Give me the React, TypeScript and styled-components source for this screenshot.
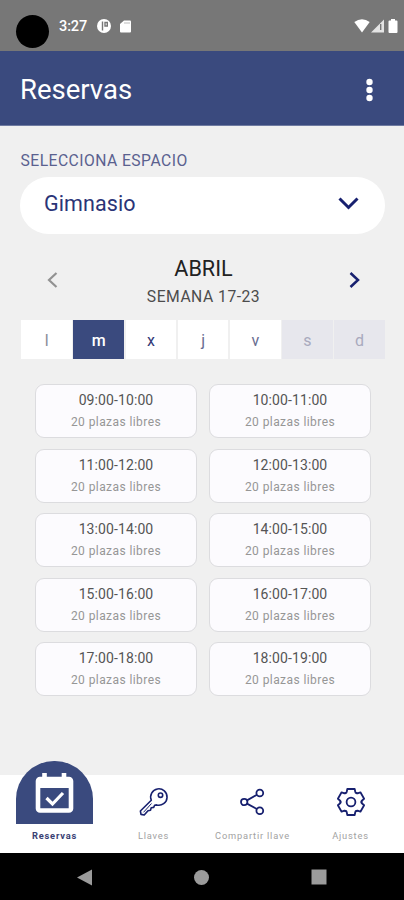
import React from 'react';
import styled, { createGlobalStyle, css } from 'styled-components';

const blue = '#3a4a7e';
const navy = '#17206f';

const GlobalStyle = createGlobalStyle`
  * { box-sizing: border-box; }
  body { margin: 0; background: #f0f0f0; }
  button { border: 0; padding: 0; background: none; font: inherit; color: inherit; }
`;

const Screen = styled.div`
  width: 404px;
  height: 900px;
  display: flex;
  flex-direction: column;
  background: #f0f0f0;
  font-family: Roboto, 'Liberation Sans', sans-serif;
  overflow: hidden;
`;

const StatusBar = styled.div`
  height: 51px;
  flex: none;
  display: flex;
  align-items: flex-start;
  background: #777777;
  color: #fff;
`;

const Camera = styled.div`
  width: 33px;
  height: 33px;
  margin: 15px 0 0 15.5px;
  border-radius: 50%;
  background: #000;
`;

const Clock = styled.span`
  width: 38px;
  margin: 18px 0 0 10.5px;
  font-size: 14.5px;
  line-height: 18px;
  font-weight: 500;
  letter-spacing: -0.1px;
`;

const StatusIcons = styled.div<{ $end?: boolean }>`
  display: flex;
  align-items: center;
  height: 14px;
  ${p => p.$end
    ? css`margin: 19px 6px 0 auto; gap: 1px;`
    : css`margin: 19px 0 0 0; gap: 9px;`}
`;

const Header = styled.header`
  height: 75px;
  flex: none;
  display: flex;
  align-items: center;
  justify-content: space-between;
  padding: 3px 31px 0 20px;
  background: ${blue};
  border-bottom: 1px solid #6f7ba1;
  color: #fff;
`;

const Title = styled.h1`
  margin: 0;
  font-size: 27.5px;
  line-height: 35px;
  font-weight: 400;
`;

const Content = styled.main`
  flex: 1;
  display: flex;
  flex-direction: column;
  padding: 25px 19px 0 20px;
`;

const Label = styled.div`
  padding-left: 0.5px;
  font-size: 15.7px;
  line-height: 20px;
  letter-spacing: 0.45px;
  color: #5a618f;
`;

const SpaceSelect = styled.button`
  height: 57px;
  margin-top: 6px;
  padding: 0 26px 5px 24px;
  display: flex;
  align-items: center;
  justify-content: space-between;
  border-radius: 29px;
  background: #fff;
  color: #2b3477;
  font-size: 21.5px;
  letter-spacing: 0.1px;
`;

const Week = styled.div`
  height: 86px;
  display: flex;
  align-items: center;
  justify-content: space-between;
  padding: 6px 25px 0 27px;
`;

const WeekText = styled.div`
  text-align: center;
  padding-top: 4px;
`;

const Month = styled.div`
  font-size: 21.6px;
  line-height: 28px;
  color: #222;
`;

const Range = styled.div`
  font-size: 15.7px;
  line-height: 27px;
  letter-spacing: 0.5px;
  color: #4c4c4c;
`;

const Days = styled.div`
  display: grid;
  grid-template-columns: repeat(7, 1fr);
  gap: 1.4px;
  height: 39px;
  padding-left: 1.2px;
`;

type DayState = 'past' | 'active' | 'open' | 'dim' | 'off';
const dayText: Record<DayState, string> = {
  past: '#8b8b98', active: '#fff', open: '#343a78', dim: '#686c91', off: '#a9aabd',
};

const Day = styled.button<{ $state: DayState }>`
  font-size: 16px;
  line-height: 20px;
  padding-top: 2px;
  font-weight: ${p => (p.$state === 'active' ? 500 : 400)};
  color: ${p => dayText[p.$state]};
  background: ${p => (p.$state === 'active' ? blue : p.$state === 'off' ? '#e7e7ed' : '#fff')};
`;

const Slots = styled.div`
  display: grid;
  grid-template-columns: 162px 162px;
  grid-auto-rows: 54px;
  gap: 10.6px 12px;
  padding: 25px 0 0 15px;
`;

const Slot = styled.button`
  display: flex;
  flex-direction: column;
  align-items: center;
  padding-top: 6px;
  border: 1px solid #dcdcdf;
  border-radius: 9px;
  background: #fcfbfe;
`;

const Hours = styled.span`
  font-size: 14px;
  line-height: 19px;
  letter-spacing: 0.1px;
  color: #555;
`;

const Free = styled.span`
  margin-top: 3px;
  font-size: 12px;
  line-height: 18px;
  letter-spacing: 0.42px;
  color: #969696;
`;

const TabBar = styled.nav`
  height: 78px;
  flex: none;
  display: grid;
  grid-template-columns: 107px 93px 105px 91px;
  grid-template-rows: 78px;
  align-items: end;
  background: #fff;
`;

const Tab = styled.button<{ $active?: boolean }>`
  display: flex;
  flex-direction: column;
  align-items: center;
  height: 92px;
  ${p => (p.$active ? css`padding: 0 0 0 2px;` : css`padding: 26px 0 0;`)}
  color: ${navy};
`;

const Dome = styled.div`
  width: 77px;
  height: 63px;
  padding-top: 12px;
  border-radius: 38px 38px 0 0;
  background: ${blue};
`;

const TabIcon = styled.div`
  height: 32px;
`;

const TabLabel = styled.span<{ $active?: boolean }>`
  margin-top: ${p => (p.$active ? 6 : 11)}px;
  font-size: 9.3px;
  line-height: 12px;
  letter-spacing: 0.8px;
  white-space: nowrap;
  font-weight: ${p => (p.$active ? 700 : 400)};
  color: ${p => (p.$active ? '#394174' : '#a2a2a2')};
`;

const SystemBar = styled.div`
  height: 47px;
  flex: none;
  display: flex;
  align-items: center;
  justify-content: space-between;
  padding: 1px 77px 0;
  background: #000;
`;

const Chevron = ({ d, w, h, color, sw }: { d: string; w: number; h: number; color: string; sw: number }) => (
  <svg width={w} height={h} viewBox={`0 0 ${w} ${h}`} fill="none" stroke={color} strokeWidth={sw}>
    <path d={d} />
  </svg>
);

const tooth = 'M-6.5-8.4C-5.6-9-4.7-9.1-4.3-10L-3.7-13H3.7L4.3-10C4.7-9.1 5.6-9 6.5-8.4';

const KeyIcon = () => (
  <svg width="30" height="30" viewBox="0 0 30 30" fill="none" stroke={navy} strokeWidth="1.6" strokeLinejoin="round">
    <path d="M12.3 13.2A8.2 8.2 0 1 1 17.6 17.9L15.6 18.3L14.7 20.4L12.2 20.8L11.5 23.2L9 23.7L5.2 28L2 27.4L1.4 24Z" />
    <path d="M4.5 25.3L12.5 16.5" strokeWidth="1" />
    <circle cx="21.5" cy="8.2" r="2.2" />
  </svg>
);

const ShareIcon = () => (
  <svg width="28" height="30" viewBox="0 -1 28 30" fill="none" stroke={navy} strokeWidth="1.8">
    <circle cx="5.2" cy="14" r="3.2" />
    <circle cx="20.8" cy="5" r="3.4" />
    <circle cx="20.8" cy="22.7" r="3.4" />
    <path d="M8 12.4L17.9 6.8M8 15.6L17.9 21" />
  </svg>
);

const GearIcon = () => (
  <svg width="30" height="30" viewBox="-15 -15 30 30" fill="none" stroke={navy} strokeWidth="1.8" strokeLinejoin="round">
    {[0, 60, 120, 180, 240, 300].map(a => <path key={a} d={tooth} transform={`rotate(${a})`} />)}
    <circle r="4.4" />
  </svg>
);

const CalendarIcon = () => (
  <svg width="77" height="42" viewBox="0 0 77 42">
    <path d="M28.5 0v5M48 0v5" stroke="#fff" strokeWidth="4.6" />
    <rect x="22" y="6" width="33" height="31.5" rx="2" fill="none" stroke="#fff" strokeWidth="4.6" />
    <path d="M22 6h33v9H22z" fill="#fff" />
    <path d="M30.5 25L36.5 31L47 20" fill="none" stroke="#fff" strokeWidth="3.2" />
  </svg>
);

const week: [string, DayState][] = [
  ['l', 'past'], ['m', 'active'], ['x', 'open'], ['j', 'dim'], ['v', 'dim'], ['s', 'off'], ['d', 'off'],
];

const hours = [
  '09:00-10:00', '10:00-11:00', '11:00-12:00', '12:00-13:00', '13:00-14:00',
  '14:00-15:00', '15:00-16:00', '16:00-17:00', '17:00-18:00', '18:00-19:00',
];

export default function App() {
  return (
    <Screen>
      <GlobalStyle />
      <StatusBar>
        <Camera />
        <Clock>3:27</Clock>
        <StatusIcons>
          <svg width="14" height="14" viewBox="0 0 14 14">
            <circle cx="7" cy="7" r="7" fill="#fff" />
            <path d="M5.5 2.5v9M8 3.5h2.3v3.5H8z" stroke="#777" strokeWidth="1.4" fill="none" />
          </svg>
          <svg width="11" height="13" viewBox="0 0 11 13">
            <path d="M4 .5h6q1 0 1 1v10q0 1-1 1H1q-1 0-1-1V4z" fill="#fff" />
            <path d="M5 2v2M7 2v2M9 2v2" stroke="#aaa" strokeWidth=".8" />
          </svg>
        </StatusIcons>
        <StatusIcons $end>
          <svg width="16" height="14" viewBox="0 0 16 14"><path d="M.3 3Q8-2.5 15.7 3L8 13.5z" fill="#fff" /></svg>
          <svg width="14" height="14" viewBox="0 0 14 14">
            <path d="M0 13.5L13 .5v13z" fill="#e4e4e4" />
            <path d="M9.7 5v6" stroke="#777" strokeWidth="1.4" />
          </svg>
          <svg width="12" height="14" viewBox="2 0 12 14">
            <path d="M7 0h4v1.5h1.5q1 0 1 1V13q0 1-1 1h-7q-1 0-1-1V2.5q0-1 1-1H7z" fill="#fff" />
          </svg>
        </StatusIcons>
      </StatusBar>
      <Header>
        <Title>Reservas</Title>
        <svg width="8" height="24" viewBox="0 0 8 24" fill="#fff">
          <circle cx="4.5" cy="4" r="3.2" /><circle cx="4.5" cy="12" r="3.2" /><circle cx="4.5" cy="20" r="3.2" />
        </svg>
      </Header>
      <Content>
        <Label>SELECCIONA ESPACIO</Label>
        <SpaceSelect>
          Gimnasio
          <Chevron w={21} h={13} d="M1.5 1.5L10.5 10.5L19.5 1.5" color={navy} sw={3} />
        </SpaceSelect>
        <Week>
          <Chevron w={11} h={16} d="M9.5 1L2 8L9.5 15" color="#929292" sw={2.2} />
          <WeekText>
            <Month>ABRIL</Month>
            <Range>SEMANA 17-23</Range>
          </WeekText>
          <Chevron w={11} h={16} d="M1.5 1L9 8L1.5 15" color={navy} sw={2.5} />
        </Week>
        <Days>
          {week.map(([d, s]) => <Day key={d} $state={s}>{d}</Day>)}
        </Days>
        <Slots>
          {hours.map(h => (
            <Slot key={h}>
              <Hours>{h}</Hours>
              <Free>20 plazas libres</Free>
            </Slot>
          ))}
        </Slots>
      </Content>
      <TabBar>
        <Tab $active>
          <Dome><CalendarIcon /></Dome>
          <TabLabel $active>Reservas</TabLabel>
        </Tab>
        <Tab><TabIcon><KeyIcon /></TabIcon><TabLabel>Llaves</TabLabel></Tab>
        <Tab><TabIcon><ShareIcon /></TabIcon><TabLabel>Compartir llave</TabLabel></Tab>
        <Tab><TabIcon><GearIcon /></TabIcon><TabLabel>Ajustes</TabLabel></Tab>
      </TabBar>
      <SystemBar>
        <svg width="15" height="17" viewBox="0 0 15 17"><path d="M0 8.5L15 .5v16z" fill="#9b9b9b" /></svg>
        <svg width="15" height="15" viewBox="0 0 15 15"><circle cx="7.5" cy="7.5" r="7.5" fill="#9b9b9b" /></svg>
        <svg width="16" height="16" viewBox="0 0 16 16"><path d="M.5.5h15v15H.5z" fill="#9b9b9b" /></svg>
      </SystemBar>
    </Screen>
  );
}
